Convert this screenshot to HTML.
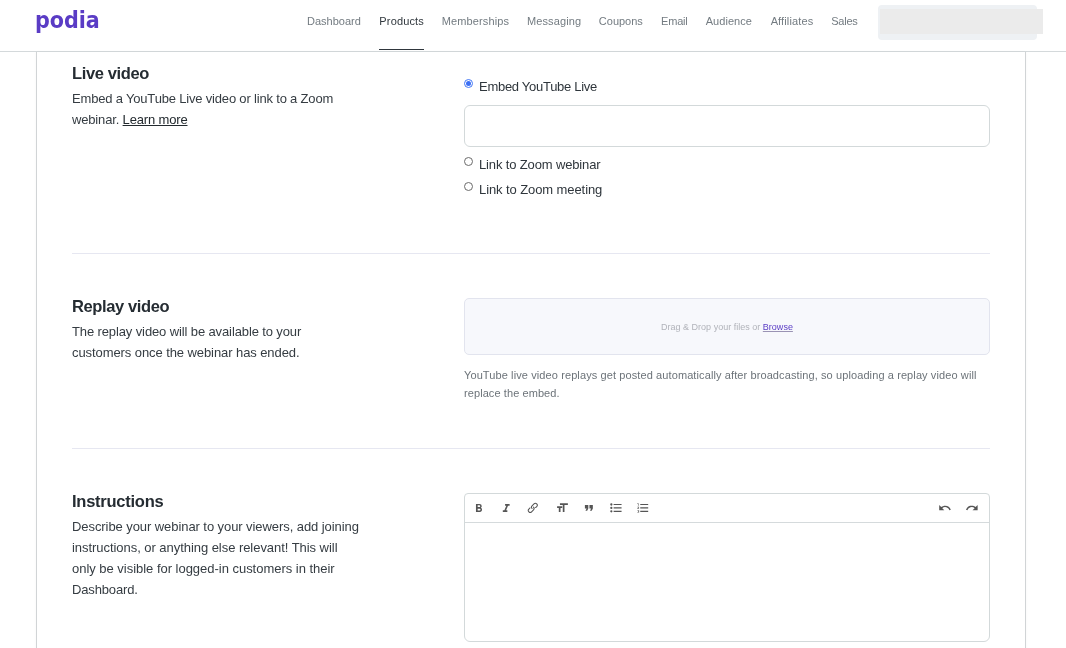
<!DOCTYPE html>
<html lang="en">
<head>
<meta charset="utf-8">
<title>Podia – Webinar</title>
<style>
*{box-sizing:border-box;margin:0;padding:0}
html,body{width:1066px;height:648px;overflow:hidden;background:#fff}
body{will-change:transform;font-family:"Liberation Sans",sans-serif;color:#2f363c;position:relative}
.abs{position:absolute}
header{position:absolute;left:0;top:0;width:1066px;height:52px;border-bottom:1px solid #d4d9db;background:#fff}
.t{position:absolute;white-space:nowrap}
.logo{font-family:"DejaVu Sans Condensed","DejaVu Sans","Liberation Sans",sans-serif;font-stretch:condensed;font-weight:bold;font-size:23px;line-height:32px;color:#5a3cc5}
.nv{font-size:11px;line-height:16px;color:#737b81}
.nv.on{color:#30373d}
.bar{position:absolute;left:379px;top:49px;width:45px;height:1px;background:#2f363c}
.ph1{left:878px;top:5px;width:159px;height:35px;border-radius:4px;background:#eef1f4}
.ph2{left:880.2px;top:9.3px;width:163.1px;height:25px;background:#ebebeb}
.card{position:absolute;left:36px;top:52px;width:990px;height:610px;border-left:1px solid #d1d4d6;border-right:1px solid #d1d4d6;box-shadow:0 0 3px rgba(0,0,0,.035)}
.h2{font-size:16.5px;line-height:22px;font-weight:bold;color:#252c32}
.desc{font-size:13px;line-height:21px;color:#353c42}
.desc a{color:#22292e;text-decoration:underline;text-underline-offset:1px}
hr{position:absolute;left:72px;width:918px;height:1px;border:0;background:#e6e7f1}
.radio{position:absolute;left:464px;width:9px;height:9px;border-radius:50%;border:1px solid #6b6b6b;background:#fff}
.radio.on{border-color:#4377f5}
.radio.on::after{content:"";position:absolute;left:1px;top:1px;width:5px;height:5px;border-radius:50%;background:#3b6ff5}
.lbl{font-size:13px;line-height:18px;color:#2f363c}
.input{position:absolute;left:464px;top:105px;width:526px;height:42px;border:1px solid #d3d9da;border-radius:6px;background:#fff}
.drop{position:absolute;left:464px;top:298px;width:526px;height:57px;border:1px solid #e2e4ee;border-radius:5px;background:#f7f8fc}
.dz{font-size:9px;line-height:20px;color:#b1b3ba}
.dz a{color:#5a3cc5;text-decoration:underline;text-decoration-color:#9a93b4}
.help{font-size:11px;line-height:18px;color:#6c7379}
.editor{position:absolute;left:464px;top:493px;width:526px;height:149px;border:1px solid #d3d9da;border-radius:4px 4px 6px 6px;background:#fff}
.editor .tb{position:absolute;left:0;top:0;width:524px;height:29px;border-bottom:1px solid #d5dadc}
.ic{position:absolute;width:16px;height:16px;fill:#555}
</style>
</head>
<body>
<header>
  <span class="bar"></span>
  <div class="abs ph1"></div>
  <div class="abs ph2"></div>
</header>
<div class="card"></div>

<span class="radio on" style="top:79px"></span>
<div class="input"></div>
<span class="radio" style="top:157px"></span>
<span class="radio" style="top:182px"></span>
<hr style="top:253px">
<div class="drop"></div>
<hr style="top:448px">
<div class="editor"><div class="tb"></div></div>

<!--ICONS-->
<svg class="ic" style="left:472px;top:501px" viewBox="-0.000 -0.176 28.194 28.194" aria-label="bold"><path d="M15.6 11.8c1-.7 1.600-1.800 1.600-2.800a4 4 0 0 0-4-4H7v14h7c2.100 0 3.700-1.700 3.700-3.800 0-1.500-.8-2.800-2.100-3.400zM10 7.500h3a1.500 1.500 0 1 1 0 3h-3v-3zm3.500 9H10v-3h3.500a1.500 1.500 0 1 1 0 3z"/></svg>
<svg class="ic" style="left:499px;top:501px" viewBox="-0.705 -0.176 28.194 28.194" aria-label="italic"><path d="M10 5v3h2.200l-3.400 8H6v3h8v-3h-2.200l3.400-8H18V5h-8z"/></svg>
<svg class="ic" style="left:526px;top:501px" viewBox="-0.176 -0.176 28.194 28.194" aria-label="link"><path d="M9.880 13.700a4.300 4.300 0 0 1 0-6.070l3.370-3.370a4.260 4.260 0 0 1 6.070 0 4.300 4.300 0 0 1 0 6.070l-1.960 1.720a.91.91 0 1 1-1.300-1.300l1.970-1.710a2.460 2.460 0 0 0-3.480-3.480l-3.380 3.370a2.460 2.460 0 0 0 0 3.480.91.91 0 1 1-1.300 1.300z M4.250 19.460a4.300 4.300 0 0 1 0-6.070l1.930-1.900a.91.91 0 1 1 1.300 1.300l-1.930 1.900a2.460 2.460 0 0 0 3.480 3.480l3.370-3.380c.96-.96.960-2.520 0-3.480a.91.91 0 1 1 1.300-1.300 4.300 4.300 0 0 1 0 6.070l-3.380 3.380a4.260 4.260 0 0 1-6.070 0z"/></svg>
<svg class="ic" style="left:555px;top:501px" viewBox="-0.705 -0.176 28.194 28.194" aria-label="heading"><path d="M12 9v3H9v7H6v-7H3V9h9zM8 4h14v3h-6v12h-3V7H8V4z"/></svg>
<svg class="ic" style="left:582px;top:501px" viewBox="-0.106 -0.176 28.194 28.194" aria-label="quote"><path d="M6 17h3l2-4V7H5v6h3zm8 0h3l2-4V7h-6v6h3z"/></svg>
<svg class="ic" style="left:609px;top:501px" viewBox="-0.123 -0.176 28.194 28.194" aria-label="bullets"><path d="M4 4a2 2 0 1 0 0 4 2 2 0 0 0 0-4zm0 6a2 2 0 1 0 0 4 2 2 0 0 0 0-4zm0 6a2 2 0 1 0 0 4 2 2 0 0 0 0-4zm4 3h14v-2H8v2zm0-6h14v-2H8v2zm0-8v2h14V5H8z"/></svg>
<svg class="ic" style="left:636px;top:501px" viewBox="-0.476 -0.176 28.194 28.194" aria-label="numbers"><path d="M2 17h2v.5H3v1h1v.5H2v1h3v-4H2v1zm1-9h1V4H2v1h1v3zm-1 3h1.800L2 13.100v.9h3v-1H3.200L5 10.900V10H2v1zm5-6v2h14V5H7zm0 14h14v-2H7v2zm0-6h14v-2H7v2z"/></svg>
<svg class="ic" style="left:938px;top:501px" viewBox="-0.123 -0.176 28.194 28.194" aria-label="undo"><path d="M12.500 8c-2.600 0-5 1-6.900 2.600L2 7v9h9l-3.600-3.600A8 8 0 0 1 20 16l2.400-.8a10.500 10.500 0 0 0-10-7.200z"/></svg>
<svg class="ic" style="left:965px;top:501px" viewBox="-0.264 -0.176 28.194 28.194" aria-label="redo"><path d="M18.400 10.600a10.500 10.500 0 0 0-16.900 4.600L4 16a8 8 0 0 1 12.700-3.600L13 16h9V7l-3.600 3.600z"/></svg>
<!--/ICONS-->

<div id="h1" class="t h2" style="left:72.00px;top:62px;letter-spacing:-0.373px">Live video</div>
<div id="h2" class="t h2" style="left:72.00px;top:295px;letter-spacing:-0.387px">Replay video</div>
<div id="h3" class="t h2" style="left:72.00px;top:490px;letter-spacing:-0.251px">Instructions</div>
<div id="d1" class="t desc" style="left:72.00px;top:88px;letter-spacing:-0.181px">Embed a YouTube Live video or link to a Zoom</div>
<div id="d2" class="t desc" style="left:72.00px;top:109px;letter-spacing:-0.159px">webinar. <a>Learn more</a></div>
<div id="d3" class="t desc" style="left:72.00px;top:321px;letter-spacing:-0.118px">The replay video will be available to your</div>
<div id="d4" class="t desc" style="left:72.00px;top:342px;letter-spacing:-0.082px">customers once the webinar has ended.</div>
<div id="d5" class="t desc" style="left:72.00px;top:516px;letter-spacing:-0.073px">Describe your webinar to your viewers, add joining</div>
<div id="d6" class="t desc" style="left:72.00px;top:537px;letter-spacing:-0.047px">instructions, or anything else relevant! This will</div>
<div id="d7" class="t desc" style="left:72.00px;top:558px;letter-spacing:-0.023px">only be visible for logged-in customers in their</div>
<div id="d8" class="t desc" style="left:72.00px;top:579px;letter-spacing:-0.144px">Dashboard.</div>
<div id="l1" class="t lbl" style="left:479.00px;top:78px;letter-spacing:-0.283px">Embed YouTube Live</div>
<div id="l2" class="t lbl" style="left:479.00px;top:156px;letter-spacing:-0.143px">Link to Zoom webinar</div>
<div id="l3" class="t lbl" style="left:479.00px;top:181px;letter-spacing:-0.089px">Link to Zoom meeting</div>
<div id="p1" class="t help" style="left:464.00px;top:366px;letter-spacing:0.103px">YouTube live video replays get posted automatically after broadcasting, so uploading a replay video will</div>
<div id="p2" class="t help" style="left:464.00px;top:384px;letter-spacing:0.082px">replace the embed.</div>
<div id="n1" class="t nv" style="left:306.99px;top:13px;letter-spacing:0.011px">Dashboard</div>
<div id="n2" class="t nv on" style="left:379.35px;top:13px;letter-spacing:0.146px">Products</div>
<div id="n3" class="t nv" style="left:441.71px;top:13px;letter-spacing:0.125px">Memberships</div>
<div id="n4" class="t nv" style="left:527.00px;top:13px;letter-spacing:0.107px">Messaging</div>
<div id="n5" class="t nv" style="left:598.85px;top:13px;letter-spacing:-0.010px">Coupons</div>
<div id="n6" class="t nv" style="left:661.00px;top:13px;letter-spacing:-0.175px">Email</div>
<div id="n7" class="t nv" style="left:705.73px;top:13px;letter-spacing:0.045px">Audience</div>
<div id="n8" class="t nv" style="left:770.63px;top:13px;letter-spacing:0.129px">Affiliates</div>
<div id="n9" class="t nv" style="left:831.26px;top:13px;letter-spacing:-0.251px">Sales</div>
<div id="dz" class="t dz" style="left:661.00px;top:317px;letter-spacing:0.011px">Drag &amp; Drop your files or <a>Browse</a></div>
<div id="lg" class="t logo" style="left:34.99px;top:4px;letter-spacing:-0.049px">podia</div>
</body>
</html>
